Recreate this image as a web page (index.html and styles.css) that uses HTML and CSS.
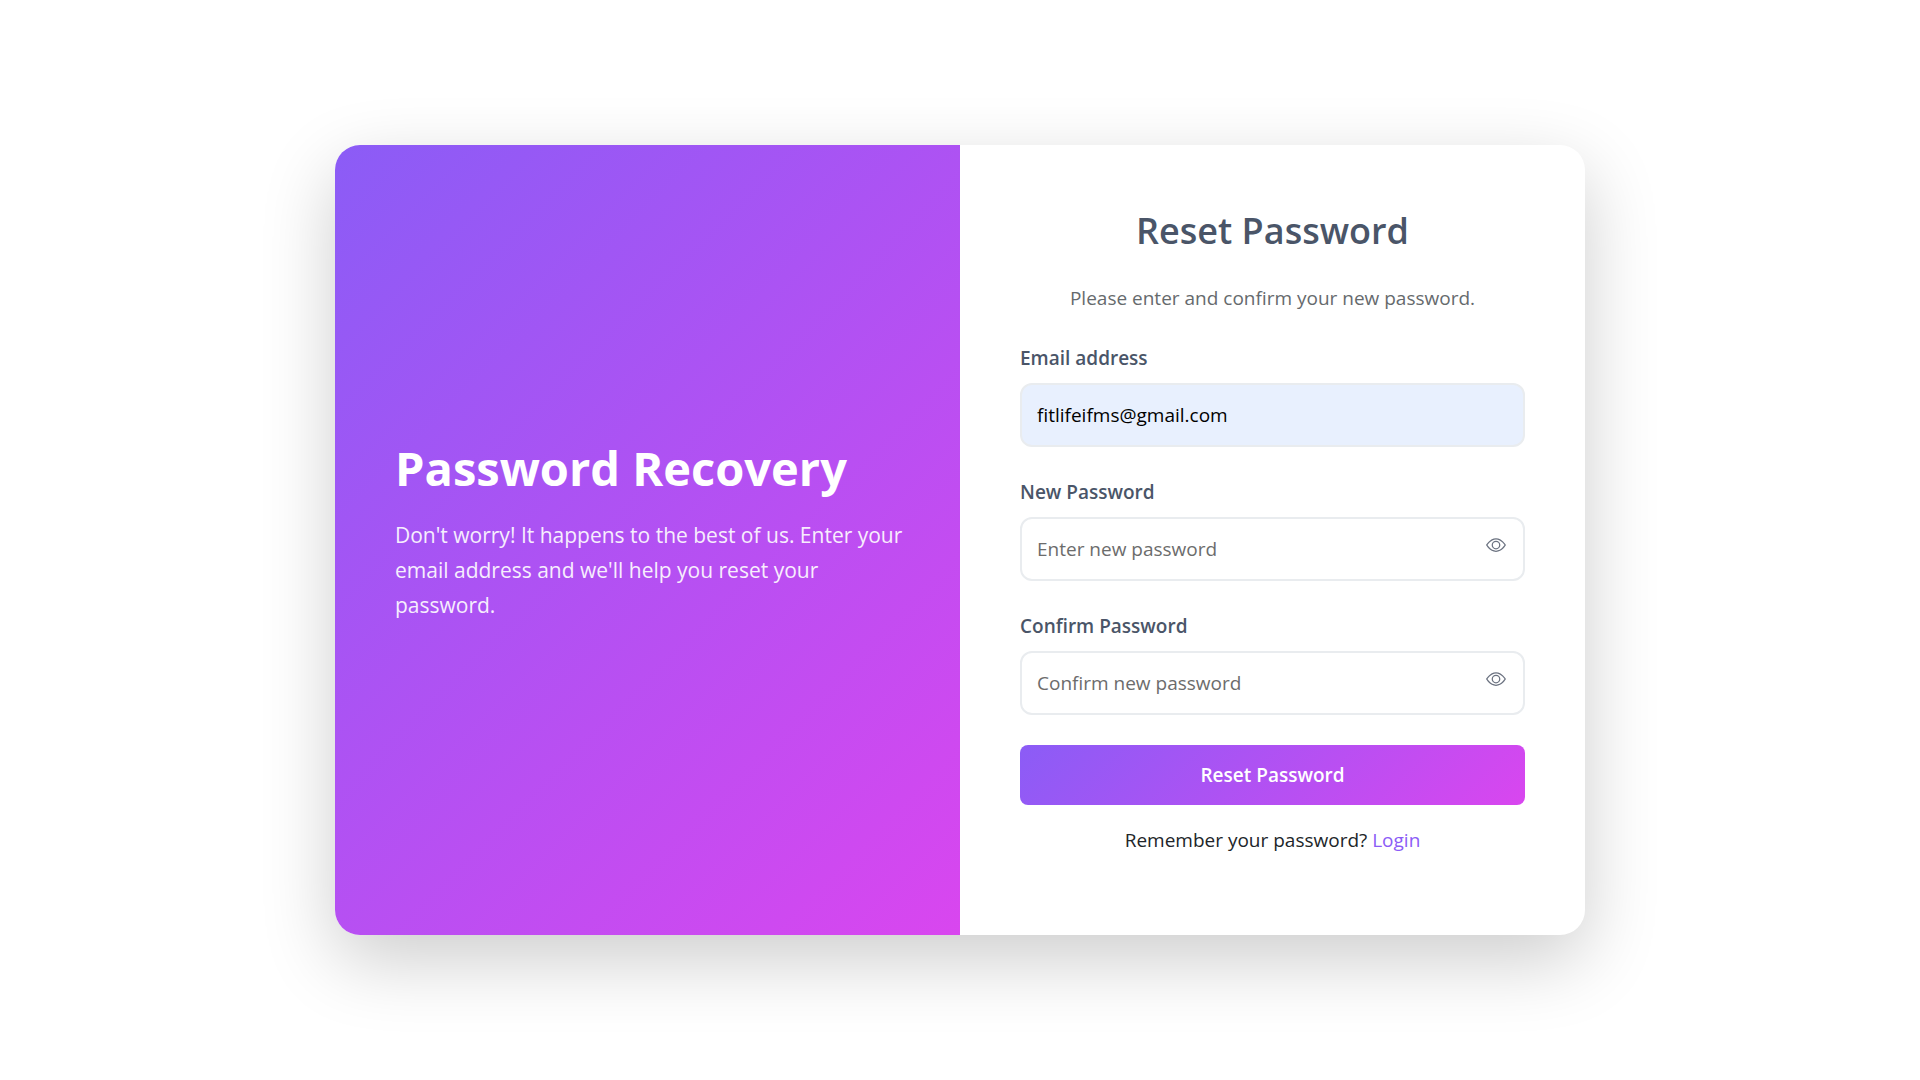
FILE: index.html
```
<!DOCTYPE html>
<html lang="en">
<head>
<meta charset="utf-8">
<meta name="viewport" content="width=device-width, initial-scale=1">
<title>Reset Password</title>
<link rel="stylesheet" href="styles.css">
</head>
<body>
<main class="card">
  <section class="intro">
    <h1 class="intro-title">Password Recovery</h1>
    <p class="intro-text">Don't worry! It happens to the best of us. Enter your email address and we'll help you reset your password.</p>
  </section>
  <section class="panel">
    <h2 class="panel-title">Reset Password</h2>
    <p class="panel-text">Please enter and confirm your new password.</p>
    <form class="form">
      <div class="field">
        <label class="label" for="email">Email address</label>
        <input class="input input-filled" id="email" type="email" value="fitlifeifms@gmail.com">
      </div>
      <div class="field">
        <label class="label" for="new-password">New Password</label>
        <div class="password">
          <input class="input" id="new-password" type="password" placeholder="Enter new password">
          <button class="toggle" type="button" aria-label="Show new password">
            <svg class="eye" viewBox="0 0 16 16" aria-hidden="true"><path d="M16 8s-3-5.500-8-5.500S0 8 0 8s3 5.500 8 5.500S16 8 16 8M1.173 8a13 13 0 0 1 1.660-2.043C4.120 4.668 5.880 3.500 8 3.500s3.879 1.168 5.168 2.457A13 13 0 0 1 14.828 8q-.086.130-.195.288c-.335.480-.830 1.120-1.465 1.755C11.879 11.332 10.119 12.500 8 12.500s-3.879-1.168-5.168-2.457A13 13 0 0 1 1.172 8z"/><path d="M8 5.500a2.500 2.500 0 1 0 0 5 2.500 2.500 0 0 0 0-5M4.500 8a3.500 3.500 0 1 1 7 0 3.500 3.500 0 0 1-7 0"/></svg>
          </button>
        </div>
      </div>
      <div class="field">
        <label class="label" for="confirm-password">Confirm Password</label>
        <div class="password">
          <input class="input" id="confirm-password" type="password" placeholder="Confirm new password">
          <button class="toggle" type="button" aria-label="Show confirmed password">
            <svg class="eye" viewBox="0 0 16 16" aria-hidden="true"><path d="M16 8s-3-5.500-8-5.500S0 8 0 8s3 5.500 8 5.500S16 8 16 8M1.173 8a13 13 0 0 1 1.660-2.043C4.120 4.668 5.880 3.500 8 3.500s3.879 1.168 5.168 2.457A13 13 0 0 1 14.828 8q-.086.130-.195.288c-.335.480-.830 1.120-1.465 1.755C11.879 11.332 10.119 12.500 8 12.500s-3.879-1.168-5.168-2.457A13 13 0 0 1 1.172 8z"/><path d="M8 5.500a2.500 2.500 0 1 0 0 5 2.500 2.500 0 0 0 0-5M4.500 8a3.500 3.500 0 1 1 7 0 3.500 3.500 0 0 1-7 0"/></svg>
          </button>
        </div>
      </div>
      <button class="submit" type="submit">Reset Password</button>
    </form>
    <p class="login">Remember your password? <a class="link" href="#login">Login</a></p>
  </section>
</main>
</body>
</html>
```
FILE: styles.css
```
* {
  box-sizing: border-box;
}

body {
  margin: 0;
  min-height: 100vh;
  display: flex;
  align-items: center;
  justify-content: center;
  padding: 20px;
  background: #fff;
  color: #212529;
  font-family: "Segoe UI", "Open Sans", "Noto Sans", sans-serif;
  font-size: 19px;
  line-height: 30px;
}

h1, h2, p {
  margin: 0;
}

.card {
  display: grid;
  grid-template-columns: 1fr 1fr;
  width: 100%;
  max-width: 1250px;
  overflow: hidden;
  background: #fff;
  border-radius: 25px;
  box-shadow: 0 25px 75px rgba(0, 0, 0, 0.2);
}

.intro {
  display: flex;
  flex-direction: column;
  justify-content: center;
  gap: 20px;
  padding: 60px 50px 80px 60px;
  background: linear-gradient(135deg, #8b5cf6, #d946ef);
  color: #fff;
}

.intro-title {
  font-size: 47px;
  font-weight: 700;
  line-height: 60px;
}

.intro-text {
  font-size: 21px;
  line-height: 35px;
  opacity: 0.9;
}

.panel {
  padding: 60px 60px 80px;
}

.panel-title {
  margin-bottom: 26px;
  color: #4a5568;
  font-size: 36px;
  font-weight: 600;
  line-height: 52px;
  text-align: center;
}

.panel-text {
  margin-bottom: 30px;
  color: #666a6d;
  text-align: center;
}

.form,
.field {
  display: flex;
  flex-direction: column;
}

.form {
  gap: 30px;
}

.field {
  gap: 10px;
}

.label {
  color: #4a5568;
  font-weight: 600;
}

.password {
  position: relative;
}

.input {
  display: block;
  width: 100%;
  padding: 15px;
  border: 2px solid #e9ecef;
  border-radius: 12px;
  background: #fff;
  color: #000;
  font: inherit;
}

.input::placeholder {
  color: #6c6c6c;
  opacity: 1;
}

.input-filled {
  background: #e8f0fe;
}

.toggle {
  position: absolute;
  top: 18px;
  right: 19px;
  display: flex;
  padding: 0;
  border: 0;
  background: none;
  color: #6b7280;
  cursor: pointer;
}

.eye {
  width: 20px;
  height: 20px;
  fill: currentColor;
}

.submit {
  padding: 15px;
  border: 0;
  border-radius: 8px;
  background: linear-gradient(135deg, #8b5cf6, #d946ef);
  color: #fff;
  font: inherit;
  font-weight: 600;
  cursor: pointer;
}

.login {
  margin-top: 20px;
  text-align: center;
}

.link {
  color: #8b5cf6;
  text-decoration: none;
}
```
